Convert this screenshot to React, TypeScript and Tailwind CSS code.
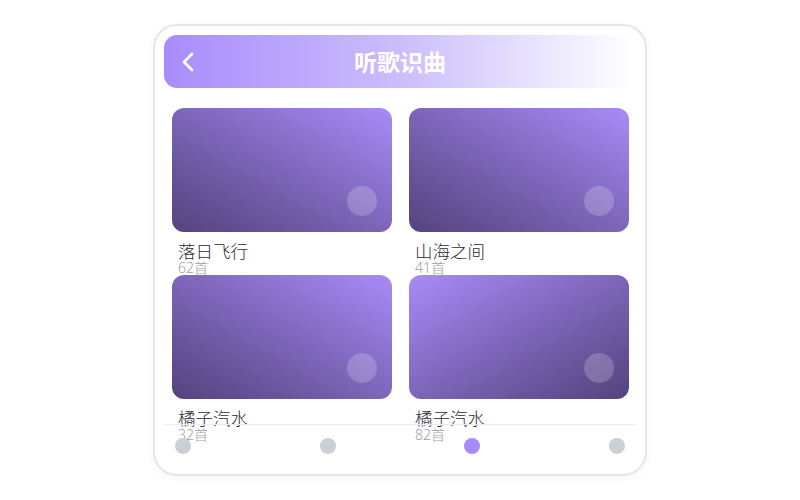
import React from "react";

type Album = { title: string; count: string; dir: "tr" | "br" };

const albums: Album[] = [
  { title: "落日飞行", count: "62首", dir: "tr" },
  { title: "山海之间", count: "41首", dir: "tr" },
  { title: "橘子汽水", count: "32首", dir: "tr" },
  { title: "橘子汽水", count: "82首", dir: "br" },
];

const font = { fontFamily: '"Noto Sans", "Noto Sans CJK SC", sans-serif' };

// cover sits on top of the caption, so the next row's cover clips the count a little
const AlbumCard = ({ album }: { album: Album }) => {
  const bg =
    album.dir === "tr"
      ? "bg-gradient-to-tr from-[#54437e] to-[#a98bf8]"
      : "bg-gradient-to-br from-[#a98bf8] to-[#54437e]";
  return (
    <div className="grid h-[167px] [grid-template-areas:'s']">
      <div className="[grid-area:s] px-1.5 pt-[133px]">
        <div className="text-[17.5px] font-light leading-[20px] text-[#2c2c31]">{album.title}</div>
        <div className="text-[14px] font-light leading-[14px] text-[#9ca1aa]">{album.count}</div>
      </div>
      <div className={`[grid-area:s] relative h-[124px] self-start rounded-[12px] ${bg}`}>
        <div className="absolute right-[15px] bottom-[16px] h-[30px] w-[30px] rounded-full bg-white/20"></div>
      </div>
    </div>
  );
};

export default function App() {
  const dots = [false, false, true, false];
  return (
    <div className="h-[500px] w-[800px] bg-white pt-6" style={font}>
      <div className="relative mx-auto h-[452px] w-[494px] overflow-hidden rounded-[24px] border-2 border-[#e6e6ea] bg-white p-[9px] shadow-[0_2px_8px_rgba(0,0,0,0.04)]">
        {/* header */}
        <div className="relative flex h-[53px] items-center justify-center rounded-[13px] bg-gradient-to-r from-[#a88cfb] via-[#cbbdfc] to-white">
          <svg className="absolute left-[17px] top-[17px]" width="14" height="20" viewBox="0 0 14 20" fill="none">
            <path d="M11 2 L3 10 L11 18" stroke="white" strokeWidth="2.6" strokeLinecap="round" strokeLinejoin="round" />
          </svg>
          <div className="text-[23px] font-bold text-white" style={{ fontFamily: '"Noto Sans CJK SC", sans-serif' }}>
            听歌识曲
          </div>
        </div>

        {/* grid */}
        <div className="grid grid-cols-2 gap-x-[17px] px-2 pt-5 pr-[7px]">
          {albums.map((a, i) => (
            <AlbumCard key={i} album={a} />
          ))}
        </div>

        {/* bottom nav */}
        <div className="absolute bottom-0 left-[9px] right-[9px] border-t border-[#ececf0] px-[11px] pt-[13px] pb-[20px]">
          <div className="flex justify-between">
            {dots.map((on, i) => (
              <div key={i} className={`h-4 w-4 rounded-full ${on ? "bg-[#a78bfa]" : "bg-[#cbd0d6]"}`}></div>
            ))}
          </div>
        </div>
      </div>
    </div>
  );
}
